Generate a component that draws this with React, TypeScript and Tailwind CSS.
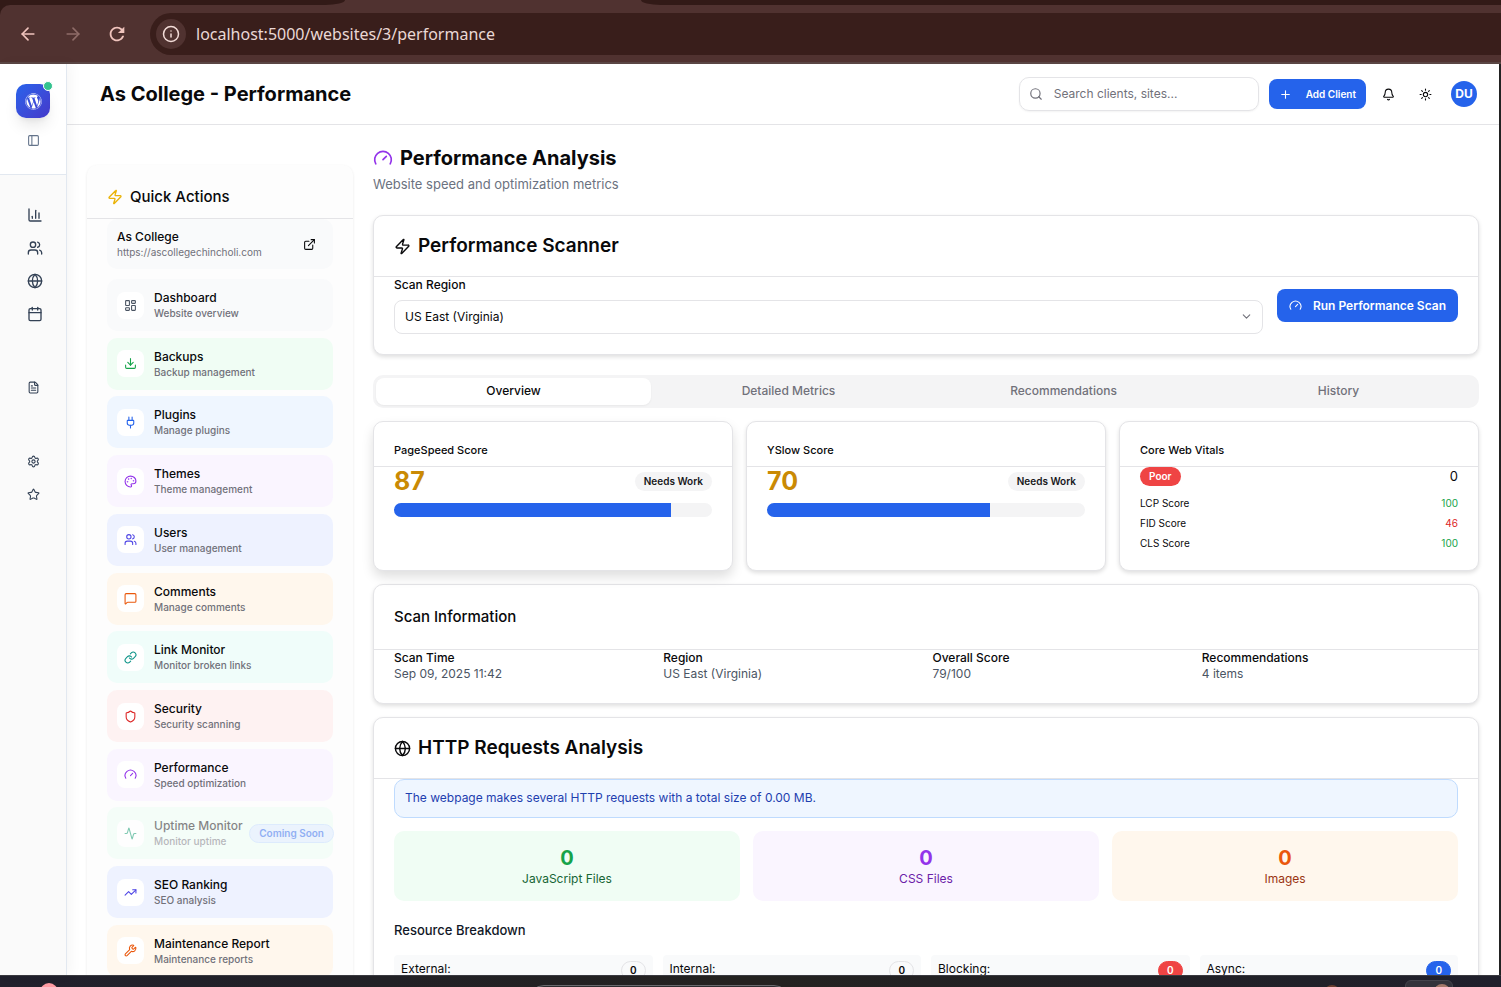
import React from "react";
import {
  Activity, ArrowLeft, ArrowRight, Bell, ChartColumn, Calendar, ChevronDown, Download, ExternalLink,
  FileText, Globe, Info, LayoutDashboard, Link, MessageSquare, Palette, PanelLeft, Plug, Plus,
  Search, Settings, Shield, Star, Sun, TrendingUp, Users, Wrench, Zap,
} from "lucide-react";
import { FaWordpress } from "react-icons/fa";
import { MdRefresh } from "react-icons/md";

function GaugeIcon({ className }: { className: string }) {
  return (
    <svg viewBox="0 0 24 24" fill="none" stroke="currentColor" strokeWidth="2" strokeLinecap="round" strokeLinejoin="round" className={className} aria-hidden="true">
      <path d="m12 14 4-4" />
      <path d="M3.34 19a10 10 0 1 1 17.32 0" />
    </svg>
  );
}

const actions = [
  { title: "Dashboard", sub: "Website overview", icon: LayoutDashboard, bg: "bg-[#f9fafb]", fg: "text-[#4b5563]" },
  { title: "Backups", sub: "Backup management", icon: Download, bg: "bg-[#f0fdf4]", fg: "text-[#16a34a]" },
  { title: "Plugins", sub: "Manage plugins", icon: Plug, bg: "bg-[#eff6ff]", fg: "text-[#2563eb]" },
  { title: "Themes", sub: "Theme management", icon: Palette, bg: "bg-[#faf5ff]", fg: "text-[#9333ea]" },
  { title: "Users", sub: "User management", icon: Users, bg: "bg-[#eef2ff]", fg: "text-[#4f46e5]" },
  { title: "Comments", sub: "Manage comments", icon: MessageSquare, bg: "bg-[#fff7ed]", fg: "text-[#ea580c]" },
  { title: "Link Monitor", sub: "Monitor broken links", icon: Link, bg: "bg-[#f0fdfa]", fg: "text-[#0d9488]" },
  { title: "Security", sub: "Security scanning", icon: Shield, bg: "bg-[#fef2f2]", fg: "text-[#dc2626]" },
  { title: "Performance", sub: "Speed optimization", icon: GaugeIcon, bg: "bg-[#faf5ff]", fg: "text-[#9333ea]" },
  { title: "Uptime Monitor", sub: "Monitor uptime", icon: Activity, bg: "bg-[#ecfdf5]", fg: "text-[#059669]", soon: true },
  { title: "SEO Ranking", sub: "SEO analysis", icon: TrendingUp, bg: "bg-[#eef2ff]", fg: "text-[#4f46e5]" },
  { title: "Maintenance Report", sub: "Maintenance reports", icon: Wrench, bg: "bg-[#fff7ed]", fg: "text-[#ea580c]" },
];

function BrowserBar() {
  return (
    <div className="shrink-0 bg-[#321a17]">
      <div className="flex h-[5px] justify-between bg-[#503230]">
        <div className="w-[345px] rounded-br-[20px_5px] bg-[#321a17]" />
        <div className="ml-[296px] flex-1 rounded-bl-[20px_5px] bg-[#321a17]" />
      </div>
      <div className="flex h-[59px] items-center rounded-tl-[10px] border-b-2 border-[#5a4644] bg-[#503230] pl-[18px]">
        <button aria-label="Back" className="text-[#f0c4bd]"><ArrowLeft className="size-5" /></button>
        <button aria-label="Forward" className="ml-[25px] text-[#8f6c68]"><ArrowRight className="size-5" /></button>
        <button aria-label="Reload" className="ml-[23px] text-[#f0c4bd]"><MdRefresh className="size-[22px]" /></button>
        <div className="ml-[22px] flex h-[42px] flex-1 items-center rounded-l-full bg-[#391e1b] pl-[6px]">
          <button aria-label="Site information" className="flex size-[30px] items-center justify-center rounded-full bg-[#503230] text-[#f3dcd8]">
            <Info className="size-[18px]" />
          </button>
          <input aria-label="Address" readOnly value="localhost:5000/websites/3/performance" className="ml-[10px] min-w-0 flex-1 bg-transparent font-['Noto_Sans',sans-serif] text-[16px] text-[#ead8d5] outline-none" />
        </div>
      </div>
    </div>
  );
}

function RailLink({ label, children, className }: { label: string; children: React.ReactNode; className: string }) {
  return <a href="#" aria-label={label} className={className}>{children}</a>;
}

function Rail() {
  return (
    <nav aria-label="Main" className="z-10 flex w-[67px] shrink-0 flex-col border-r border-[#e2e8f0] bg-[#fafafa] text-[#334155] shadow-[4px_0_12px_rgba(0,0,0,0.04)]">
      <div className="flex h-[111px] shrink-0 flex-col items-center border-b border-[#e2e8f0] bg-white pt-5">
        <div className="relative flex size-[34px] items-center justify-center rounded-[10px] bg-linear-to-br from-[#2563eb] to-[#4338ca] text-white shadow-lg">
          <FaWordpress className="size-[17px]" />
          <span className="absolute -right-[3px] -top-[3px] size-[10px] rounded-full border border-white bg-[#34c38f]" />
        </div>
        <button aria-label="Toggle sidebar" className="mt-4 text-[#64748b]"><PanelLeft className="size-[13px]" /></button>
      </div>
      <div className="flex flex-col gap-[17px] pl-[27px] pt-8">
        <RailLink label="Analytics" className="size-4"><ChartColumn className="size-4" /></RailLink>
        <RailLink label="Clients" className="size-4"><Users className="size-4" /></RailLink>
        <RailLink label="Websites" className="size-4"><Globe className="size-4" /></RailLink>
        <RailLink label="Calendar" className="size-4"><Calendar className="size-4" /></RailLink>
      </div>
      <div className="flex flex-col items-center pt-[59px]">
        <RailLink label="Reports" className="size-[13px]"><FileText className="size-[13px]" /></RailLink>
        <RailLink label="Settings" className="mt-[61px] size-[13px]"><Settings className="size-[13px]" /></RailLink>
        <RailLink label="Favorites" className="mt-5 size-[13px]"><Star className="size-[13px]" /></RailLink>
      </div>
    </nav>
  );
}

function TopBar() {
  return (
    <header className="flex h-[61px] shrink-0 items-center border-b border-[#e4e4e7] bg-white pl-[33px] pr-[22px]">
      <h1 className="flex-1 text-[20px] font-bold leading-7">As College - Performance</h1>
      <label className="flex h-[34px] w-[240px] items-center rounded-[10px] border border-[#e4e4e7] pl-[9px] shadow-xs">
        <Search className="size-[14px] text-[#71717a]" />
        <input type="search" aria-label="Search" placeholder="Search clients, sites..." className="ml-[11px] min-w-0 flex-1 bg-transparent text-[12px] outline-none placeholder:text-[#71717a]" />
      </label>
      <button className="ml-[10px] flex h-[30px] items-center rounded-lg bg-[#2563eb] px-[10px] text-[10px] font-semibold text-white">
        <Plus className="mr-[14px] size-[13px]" />Add Client
      </button>
      <button aria-label="Notifications" className="ml-4"><Bell className="size-[13px]" /></button>
      <button aria-label="Toggle theme" className="ml-6"><Sun className="size-[13px]" /></button>
      <button aria-label="Account" className="ml-[19px] flex size-[26px] items-center justify-center rounded-full bg-[#2563eb] text-[12px] font-bold text-white">DU</button>
    </header>
  );
}

function QuickActions() {
  return (
    <aside className="mt-10 w-[266px] shrink-0 self-start rounded-[10px] bg-[#fdfdfd] shadow-[0_1px_3px_rgba(0,0,0,0.09)]">
      <h2 className="flex h-[54px] items-end gap-[7px] border-b border-[#e4e4e7] px-5 pb-[11px] text-[15px] font-medium leading-5">
        <Zap className="mb-[2px] size-4 text-[#eab308]" />Quick Actions
      </h2>
      <div className="px-5 pb-5">
        <div className="flex h-[50px] items-center justify-between rounded-[10px] bg-[#f9fafb] pl-[10px] pr-[17px]">
          <div>
            <p className="text-[12px] font-medium leading-4">As College</p>
            <p className="text-[10px] leading-[14px] text-[#71717a]">https://ascollegechincholi.com</p>
          </div>
          <a href="#" aria-label="Open website"><ExternalLink className="size-[13px]" /></a>
        </div>
        <ul className="mt-[10px] flex h-[698px] flex-col justify-between">
          {actions.map(({ title, sub, icon: Icon, bg, fg, soon }) => (
            <li key={title}>
              <a href="#" className={`flex h-[52px] items-center rounded-[10px] px-[10px] ${bg} ${soon ? "opacity-50" : ""}`}>
                <span className={`flex size-[27px] shrink-0 items-center justify-center rounded-lg bg-white ${fg}`}>
                  <Icon className="size-[13px]" />
                </span>
                <span className="ml-[10px] flex flex-col whitespace-nowrap">
                  <span className="text-[12px] font-medium leading-4">{title}</span>
                  <span className="text-[10px] font-medium leading-[14px] text-[#71717a]">{sub}</span>
                </span>
                {soon && (
                  <span className="-mr-[11px] ml-auto whitespace-nowrap rounded-full border border-[#bfdbfe] bg-[#dbeafe] px-[9px] text-[10px] font-semibold leading-[17px] text-[#2563eb]">Coming Soon</span>
                )}
              </a>
            </li>
          ))}
        </ul>
      </div>
    </aside>
  );
}

const card = "rounded-[10px] border border-[#e4e4e7] bg-white";
const cardShadow = "shadow-[0_2px_4px_rgba(0,0,0,0.13)]";

function ScoreCard({ title, score, shadow }: { title: string; score: number; shadow: string }) {
  return (
    <section className={`${card} ${shadow}`}>
      <h3 className="border-b border-[#e4e4e7] px-5 pb-2 pt-5 text-[11px] font-medium leading-4">{title}</h3>
      <div className="px-5">
        <div className="flex h-[29px] items-center justify-between">
          <span className="text-[25px] font-bold leading-[29px] text-[#ca8a04]">{score}</span>
          <span className="rounded-full bg-[#f4f4f5] px-[9px] text-[10px] font-semibold leading-[19px] text-[#18181b]">Needs Work</span>
        </div>
        <div role="progressbar" aria-label={title} aria-valuenow={score} className="mt-[7px] h-[14px] overflow-hidden rounded-full bg-[#f4f4f5]">
          <div className="h-full bg-[#2563eb]" style={{ width: `${score}%` }} />
        </div>
      </div>
    </section>
  );
}

const vitals = [
  ["LCP Score", "100", "text-[#16a34a]"],
  ["FID Score", "46", "text-[#dc2626]"],
  ["CLS Score", "100", "text-[#16a34a]"],
];
const scanInfo = [
  ["Scan Time", "Sep 09, 2025 11:42"],
  ["Region", "US East (Virginia)"],
  ["Overall Score", "79/100"],
  ["Recommendations", "4 items"],
];
const files = [
  ["JavaScript Files", "bg-[#f0fdf4]", "text-[#16a34a]", "text-[#166534]"],
  ["CSS Files", "bg-[#faf5ff]", "text-[#9333ea]", "text-[#6b21a8]"],
  ["Images", "bg-[#fff7ed]", "text-[#ea580c]", "text-[#9a3412]"],
];
const resources = [
  ["External:", "border-[#e4e4e7] text-[#09090b]"],
  ["Internal:", "border-[#e4e4e7] text-[#09090b]"],
  ["Blocking:", "border-[#ef4444] bg-[#ef4444] text-white"],
  ["Async:", "border-[#2563eb] bg-[#2563eb] text-white"],
];

function Report() {
  return (
    <main className="min-w-0 flex-1 pb-5 pt-5">
      <h2 className="flex h-[26px] items-center gap-[7px] text-[20px] font-bold">
        <GaugeIcon className="size-5 text-[#9333ea]" />Performance Analysis
      </h2>
      <p className="mt-[3px] text-[13px] leading-5 text-[#6b7280]">Website speed and optimization metrics</p>

      <section className={`mt-[21px] ${card} ${cardShadow}`}>
        <h3 className="flex h-[61px] items-center gap-[7px] border-b border-[#e4e4e7] px-5 text-[19px] font-semibold">
          <Zap className="size-[17px]" />Performance Scanner
        </h3>
        <div className="flex items-center gap-[14px] px-5 pb-5">
          <div className="flex-1">
            <label htmlFor="region" className="block text-[12px] font-medium leading-4">Scan Region</label>
            <div className="relative mt-[7px]">
              <select id="region" className="h-[34px] w-full appearance-none rounded-lg border border-[#e4e4e7] bg-white px-[10px] text-[12px]">
                <option>US East (Virginia)</option>
              </select>
              <ChevronDown className="pointer-events-none absolute right-[10px] top-[10px] size-[13px] text-[#71717a]" />
            </div>
          </div>
          <button className="flex h-[33px] items-center rounded-lg bg-[#2563eb] px-3 text-[12px] font-semibold text-white">
            <GaugeIcon className="mr-[11px] size-[13px]" />Run Performance Scan
          </button>
        </div>
      </section>

      <div role="tablist" className="mt-5 grid h-[33px] grid-cols-4 rounded-[10px] bg-[#f4f4f5] p-[3px] text-[12px] font-medium leading-4 text-[#71717a]">
        <button role="tab" aria-selected="true" className="rounded-lg bg-white pb-px text-[#09090b] shadow-xs">Overview</button>
        <button role="tab" aria-selected="false" className="pb-px">Detailed Metrics</button>
        <button role="tab" aria-selected="false" className="pb-px">Recommendations</button>
        <button role="tab" aria-selected="false" className="pb-px">History</button>
      </div>

      <div className="mt-[13px] grid grid-cols-3 gap-[13px]">
        <ScoreCard title="PageSpeed Score" score={87} shadow="shadow-[0_6px_12px_rgba(0,0,0,0.13)]" />
        <ScoreCard title="YSlow Score" score={70} shadow="shadow-[0_2px_4px_rgba(0,0,0,0.13)]" />
        <section className={`${card} ${cardShadow}`}>
          <h3 className="border-b border-[#e4e4e7] px-5 pb-2 pt-5 text-[11px] font-medium leading-4">Core Web Vitals</h3>
          <div className="px-5 pb-5">
            <div className="flex items-center justify-between">
              <span className="rounded-full bg-[#ef4444] px-[9px] text-[10px] font-semibold leading-[19px] text-white">Poor</span>
              <span className="text-[13px] leading-[19px]">0</span>
            </div>
            <dl className="mt-[10px] flex flex-col gap-[6px] text-[10px] leading-[14px]">
              {vitals.map(([name, value, color]) => (
                <div key={name} className="flex justify-between">
                  <dt>{name}</dt>
                  <dd className={color}>{value}</dd>
                </div>
              ))}
            </dl>
          </div>
        </section>
      </div>

      <section className={`mt-[13px] ${card} ${cardShadow}`}>
        <h3 className="flex h-[65px] items-center border-b border-[#e4e4e7] px-5 text-[15px] font-medium">Scan Information</h3>
        <dl className="grid grid-cols-4 gap-[13px] px-5 pb-[21px] text-[12px] leading-4">
          {scanInfo.map(([name, value]) => (
            <div key={name}>
              <dt className="font-medium">{name}</dt>
              <dd className="text-[#4b5563]">{value}</dd>
            </div>
          ))}
        </dl>
      </section>

      <section className={`mt-[13px] ${card} ${cardShadow}`}>
        <h3 className="flex h-[61px] items-center gap-[7px] border-b border-[#e4e4e7] px-5 text-[19px] font-semibold">
          <Globe className="size-[17px]" />HTTP Requests Analysis
        </h3>
        <div className="px-5 pb-5">
          <p className="rounded-[10px] border border-[#bfdbfe] bg-[#eff6ff] px-[10px] pb-[11px] pt-[10px] text-[12px] leading-4 text-[#1e40af]">
            The webpage makes several HTTP requests with a total size of 0.00 MB.
          </p>
          <div className="mt-[13px] grid grid-cols-3 gap-[13px] text-center">
            {files.map(([name, bg, strong, soft]) => (
              <div key={name} className={`rounded-[10px] pb-[14px] pt-[15px] ${bg}`}>
                <p className={`text-[20px] font-bold leading-[25px] ${strong}`}>0</p>
                <p className={`text-[12px] leading-4 ${soft}`}>{name}</p>
              </div>
            ))}
          </div>
          <h4 className="mt-[19px] text-[13px] font-medium leading-5 text-[#111827]">Resource Breakdown</h4>
          <dl className="mt-[15px] grid grid-cols-4 gap-[10px] text-[12px]">
            {resources.map(([name, tone]) => (
              <div key={name} className="flex items-start justify-between rounded bg-[#f9fafb] p-[7px] pt-[6px]">
                <dt className="leading-4">{name}</dt>
                <dd className={`rounded-full border px-2 text-[10px] font-semibold leading-[17px] ${tone}`}>0</dd>
              </div>
            ))}
          </dl>
        </div>
      </section>
    </main>
  );
}

export default function App() {
  return (
    <div className="flex h-screen flex-col overflow-hidden bg-white font-['Inter',sans-serif] text-[#09090b]">
      <BrowserBar />
      <div className="flex min-h-0 flex-1 border-r-2 border-[#222222]">
        <Rail />
        <div className="flex min-w-0 flex-1 flex-col">
          <TopBar />
          <div className="flex min-h-0 flex-1 gap-5 overflow-hidden pl-5 pr-5">
            <QuickActions />
            <Report />
          </div>
        </div>
      </div>
      <div className="relative flex h-3 shrink-0 overflow-hidden border-t border-[#3a3a40] bg-linear-to-r from-[#20202c] via-[#242220] to-[#20202c]">
        <span className="absolute left-10 top-[7px] size-[18px] rounded-full bg-[#ff9aa2]" />
        <span className="absolute left-[528px] top-[9px] h-8 w-[262px] rounded-full border border-[#6a6a6e] bg-[#2d2d30]" />
        <span className="absolute left-[1405px] top-[4px] h-8 w-12 rounded-md border border-[#44444c] bg-[#33333b]" />
        <span className="absolute left-[1324px] top-[9px] size-4 rounded-full bg-[#6b4031]" />
        <span className="absolute left-[1434px] top-[8px] size-4 rounded-full bg-[#a5796a]" />
      </div>
    </div>
  );
}
